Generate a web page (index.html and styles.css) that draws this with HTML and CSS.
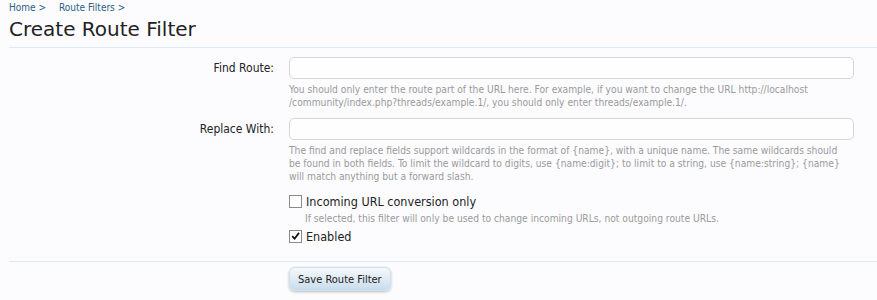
FILE: index.html
```html
<!DOCTYPE html>
<html>
<head>
<meta charset="utf-8">
<link rel="stylesheet" href="styles.css">
</head>
<body>
<div class="page">
  <nav class="breadcrumb">
    <a class="crumb" href="#">Home</a><span class="sep">&gt;</span>
    <a class="crumb" href="#">Route Filters</a><span class="sep">&gt;</span>
  </nav>
  <h1 class="title">Create Route Filter</h1>
  <form class="form">
    <div class="row">
      <label class="label">Find Route:</label>
      <div class="control">
        <input class="text-input" type="text">
        <p class="explain">You should only enter the route part of the URL here. For example, if you want to change the URL http://localhost /community/index.php?threads/example.1/, you should only enter threads/example.1/.</p>
      </div>
    </div>
    <div class="row">
      <label class="label">Replace With:</label>
      <div class="control">
        <input class="text-input" type="text">
        <p class="explain">The find and replace fields support wildcards in the format of {name}, with a unique name. The same wildcards should be found in both fields. To limit the wildcard to digits, use {name:digit}; to limit to a string, use {name:string}; {name} will match anything but a forward slash.</p>
      </div>
    </div>
    <div class="row checks">
      <div class="label"></div>
      <div class="control">
        <div class="check">
          <span class="box"></span>
          <span class="check-label">Incoming URL conversion only</span>
        </div>
        <p class="hint">If selected, this filter will only be used to change incoming URLs, not outgoing route URLs.</p>
        <div class="check">
          <span class="box"><svg viewBox="0 0 12 12" width="12" height="12"><path d="M2.4 6.2 L5 8.9 L9.8 2.6" fill="none" stroke="#111" stroke-width="1.9"/></svg></span>
          <span class="check-label">Enabled</span>
        </div>
      </div>
    </div>
    <div class="row submit">
      <div class="label"></div>
      <div class="control">
        <button class="button" type="button">Save Route Filter</button>
      </div>
    </div>
  </form>
</div>
</body>
</html>
```

FILE: styles.css
```css
html, body {
  margin: 0;
  padding: 0;
  background: #fcfcff;
}
.page {
  font-family: "DejaVu Sans Condensed", "DejaVu Sans", sans-serif;
  font-stretch: condensed;
  color: #222;
  padding: 0 0 0 9px;
}
.breadcrumb {
  font-size: 10px;
  line-height: 14px;
  padding-top: 1px;
  height: 15px;
}
.crumb {
  color: #2b5d85;
  text-decoration: none;
}
.sep {
  color: #2b5d85;
  margin: 0 10px 0 3px;
}
.title {
  font-family: "DejaVu Sans", sans-serif;
  font-stretch: normal;
  font-size: 20px;
  font-weight: normal;
  color: #222;
  margin: 0;
  line-height: 26px;
  height: 31px;
}
.form {
  border-top: 1px solid #dcebf7;
  margin: 0;
  padding-top: 9px;
}
.row {
  display: grid;
  grid-template-columns: 280px 565px;
  margin-bottom: 9px;
}
.label {
  text-align: right;
  padding-right: 15px;
  font-size: 12px;
  line-height: 22px;
  color: #222;
}
.text-input {
  display: block;
  box-sizing: border-box;
  width: 565px;
  height: 22px;
  margin: 0;
  border: 1px solid #d6d6d6;
  border-radius: 5px;
  background: #fefefe;
}
.explain {
  margin: 4px 0 0 0;
  max-width: 555px;
  font-size: 10.2px;
  line-height: 13px;
  color: #9a9a9a;
}
.checks {
  margin-top: 10px;
}
.check {
  display: flex;
  align-items: center;
  gap: 4px;
  height: 16px;
}
.box {
  box-sizing: border-box;
  width: 13px;
  height: 13px;
  border: 1px solid #8a8a8a;
  background: #fff;
  display: flex;
  align-items: center;
  justify-content: center;
}
.box svg {
  display: block;
}
.check-label {
  font-size: 12.5px;
  color: #222;
}
.hint {
  margin: 3px 0 3px 16px;
  font-size: 10.2px;
  line-height: 13px;
  color: #9a9a9a;
}
.submit {
  border-top: 1px solid #dcebf7;
  margin-top: 17px;
  padding-top: 5px;
}
.button {
  font-family: "DejaVu Sans Condensed", "DejaVu Sans", sans-serif;
  font-stretch: condensed;
  font-size: 11px;
  color: #222;
  height: 24px;
  padding: 0 8px;
  margin-left: 0;
  border: 1px solid #cfe0ee;
  border-radius: 6px;
  background: linear-gradient(to bottom, #f4f9fd 0%, #dde9f4 55%, #c9dcec 100%);
  box-shadow: 0 1px 3px rgba(0,0,0,0.25);
}
```
